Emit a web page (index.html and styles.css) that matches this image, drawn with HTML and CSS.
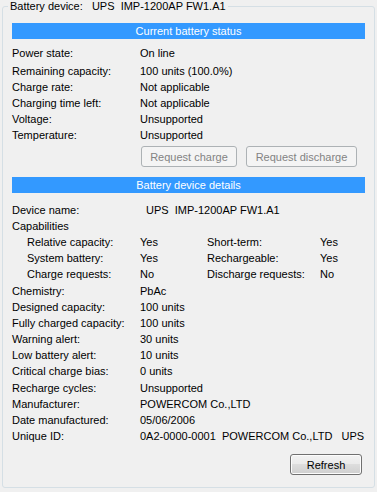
FILE: index.html
```html
<!DOCTYPE html>
<html>
<head>
<meta charset="utf-8">
<link rel="stylesheet" href="styles.css">
</head>
<body>
<fieldset class="group">
  <legend class="group-title">Battery device:   UPS  IMP-1200AP FW1.A1</legend>
  <div class="bar">Current battery status</div>
  <div class="status">
    <div class="row first"><span class="k">Power state:</span><span class="v">On line</span></div>
    <div class="row"><span class="k">Remaining capacity:</span><span class="v">100 units (100.0%)</span></div>
    <div class="row"><span class="k">Charge rate:</span><span class="v">Not applicable</span></div>
    <div class="row"><span class="k">Charging time left:</span><span class="v">Not applicable</span></div>
    <div class="row"><span class="k">Voltage:</span><span class="v">Unsupported</span></div>
    <div class="row"><span class="k">Temperature:</span><span class="v">Unsupported</span></div>
  </div>
  <div class="actions">
    <button class="btn btn-charge" disabled>Request charge</button>
    <button class="btn btn-discharge" disabled>Request discharge</button>
  </div>
  <div class="bar bar-details">Battery device details</div>
  <div class="details">
    <div class="row"><span class="k">Device name:</span><span class="v v-device">UPS  IMP-1200AP FW1.A1</span></div>
    <div class="row"><span class="k">Capabilities</span></div>
    <div class="caps">
      <span>Relative capacity:</span><span>Yes</span><span>Short-term:</span><span>Yes</span>
      <span>System battery:</span><span>Yes</span><span>Rechargeable:</span><span>Yes</span>
      <span>Charge requests:</span><span>No</span><span>Discharge requests:</span><span>No</span>
    </div>
    <div class="row"><span class="k">Chemistry:</span><span class="v">PbAc</span></div>
    <div class="row"><span class="k">Designed capacity:</span><span class="v">100 units</span></div>
    <div class="row"><span class="k">Fully charged capacity:</span><span class="v">100 units</span></div>
    <div class="row"><span class="k">Warning alert:</span><span class="v">30 units</span></div>
    <div class="row"><span class="k">Low battery alert:</span><span class="v">10 units</span></div>
    <div class="row"><span class="k">Critical charge bias:</span><span class="v">0 units</span></div>
    <div class="row"><span class="k">Recharge cycles:</span><span class="v">Unsupported</span></div>
    <div class="row"><span class="k">Manufacturer:</span><span class="v">POWERCOM Co.,LTD</span></div>
    <div class="row"><span class="k">Date manufactured:</span><span class="v">05/06/2006</span></div>
    <div class="row"><span class="k">Unique ID:</span><span class="v">0A2-0000-0001  POWERCOM Co.,LTD   UPS</span></div>
  </div>
  <div class="footer">
    <button class="btn btn-refresh">Refresh</button>
  </div>
</fieldset>
</body>
</html>
```
FILE: styles.css
```css
html, body {
  margin: 0;
  padding: 0;
  background: #f0f0f0;
}
body {
  font-family: "Liberation Sans", Arial, sans-serif;
  font-size: 11px;
  color: #000;
}
.group {
  margin: 0 2px 3px 2px;
  padding: 10px 9px 12px 9px;
  border: 1px solid #d5dfe5;
  border-radius: 3px;
  min-width: 0;
}
.group-title {
  margin-left: -4px;
  padding: 0 2px;
  line-height: 13px;
  white-space: pre;
}
.bar {
  background: #3399ff;
  color: #fff;
  text-align: center;
  height: 16px;
  line-height: 16px;
}
.status {
  margin-top: 6px;
}
.row {
  display: flex;
  height: 16px;
  line-height: 16px;
  white-space: pre;
}
.row.first {
  height: 18px;
}
.k {
  width: 128px;
  flex: none;
}
.v-device {
  padding-left: 6px;
}
.actions {
  display: flex;
  justify-content: flex-end;
  gap: 9px;
  padding-right: 8px;
  margin-top: 3px;
}
.btn {
  font: inherit;
  height: 21px;
  padding: 0;
  border: 1px solid #707070;
  border-radius: 3px;
  background: linear-gradient(#f2f2f2 0%, #ebebeb 45%, #dddddd 50%, #cfcfcf 100%);
  box-shadow: inset 0 0 0 1px #fcfcfc;
  color: #000;
}
.btn:disabled {
  border-color: #adb2b5;
  background: #f4f4f4;
  box-shadow: none;
  color: #838383;
}
.btn-charge { width: 96px; }
.btn-discharge { width: 111px; }
.bar-details {
  margin-top: 10px;
}
.details {
  margin-top: 8.6px;
}
.details .row {
  height: 16.2px;
  line-height: 16.2px;
}
.caps {
  display: grid;
  grid-template-columns: 113px 67px 113px 1fr;
  grid-auto-rows: 16.2px;
  line-height: 16.2px;
  padding-left: 15px;
  white-space: pre;
}
.footer {
  display: flex;
  justify-content: flex-end;
  padding-right: 3px;
  margin-top: 10px;
}
.btn-refresh {
  width: 72px;
}
```
